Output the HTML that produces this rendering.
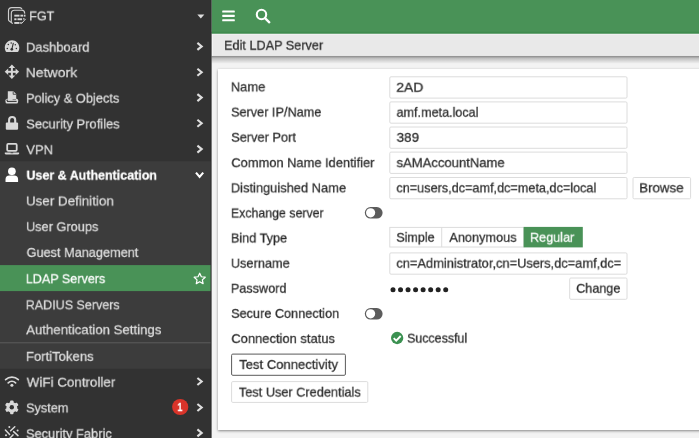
<!DOCTYPE html>
<html lang="en">
<head>
<meta charset="utf-8">
<title>Edit LDAP Server</title>
<style>
html,body{margin:0;padding:0}
body{width:699px;height:438px;overflow:hidden;position:relative;background:#f3f3f3;font-family:"Liberation Sans",sans-serif}
#card{position:absolute;left:218px;top:69px;width:500px;height:360.5px;background:#fff;box-shadow:0 .5px 2.5px rgba(0,0,0,.45)}
#shapes{position:absolute;left:0;top:0}
.t{position:absolute;white-space:nowrap;line-height:1;transform-origin:0 0;font-weight:400;will-change:transform}
</style>
</head>
<body>
<div id="card"></div>
<svg id="shapes" width="699" height="438" viewBox="0 0 699 438">
<defs>
<linearGradient id="tsh" x1="0" y1="0" x2="0" y2="1">
<stop offset="0" stop-color="#000" stop-opacity=".45"/>
<stop offset=".35" stop-color="#000" stop-opacity=".2"/>
<stop offset="1" stop-color="#000" stop-opacity="0"/>
</linearGradient>
</defs>
<!-- title bar + shadow -->
<rect x="211.5" y="55.8" width="490" height="8" fill="url(#tsh)"/>
<rect x="211.5" y="33" width="490" height="22.8" fill="#e9e9e9"/>
<!-- header -->
<rect x="211.5" y="33.4" width="490" height="1.2" fill="#f6f4f6"/>
<rect x="211.5" y="33.4" width="1.3" height="22.4" fill="#f6f6f6"/>
<rect x="211.5" y="0" width="490" height="33.5" fill="#499257"/>
<rect x="211.5" y="31.8" width="490" height="1.7" fill="#3f8b4e"/>
<!-- sidebar -->
<rect x="0" y="0" width="211.6" height="438" fill="#2b2b2b"/>
<rect x="0" y="0" width="210.5" height="438" fill="#323232"/>
<rect x="0" y="161.3" width="210.5" height="207.4" fill="#3c3c3c"/>
<rect x="0" y="265.1" width="210.5" height="26" fill="#499257"/>
<rect x="0" y="342.3" width="210.5" height="1" fill="#5c5c5c"/>
<!-- caret -->
<path d="M197.3 14.6 L204.3 14.6 L200.8 18.6 Z" fill="#dedede"/>
<!-- chevrons -->
<g fill="none" stroke="#dedede" stroke-width="2.1">
<path d="M197.4 42.9 L201.7 46.4 L197.4 49.9"/>
<path d="M197.4 68.7 L201.7 72.2 L197.4 75.7"/>
<path d="M197.4 94.1 L201.7 97.6 L197.4 101.1"/>
<path d="M197.4 119.8 L201.7 123.3 L197.4 126.8"/>
<path d="M197.4 145.6 L201.7 149.1 L197.4 152.6"/>
<path d="M197.4 378 L201.7 381.5 L197.4 385"/>
<path d="M197.4 404 L201.7 407.5 L197.4 411"/>
<path d="M197.4 429.4 L201.7 432.9 L197.4 436.4"/>
</g>
<path d="M196 172.6 L199.6 176.9 L203.2 172.6" fill="none" stroke="#fff" stroke-width="2.1"/>
<!-- star -->
<path d="M199.7 273.2 L201.35 276.75 L205.2 277.2 L202.35 279.85 L203.1 283.65 L199.7 281.75 L196.3 283.65 L197.05 279.85 L194.2 277.2 L198.05 276.75 Z" fill="none" stroke="#fff" stroke-width="1.25" stroke-linejoin="round"/>
<!-- badge -->
<circle cx="180.2" cy="407" r="8.1" fill="#d9342a"/>
<!-- FGT icon -->
<g fill="none" stroke="#cfcfcf" stroke-width="1.15" stroke-linecap="round" stroke-linejoin="round">
<path d="M12.3 23.3 L9.3 21 A2 2 0 0 1 8.5 19.4 V10.9 A3.3 3.3 0 0 1 11.8 7.6 H19.4 A3 3 0 0 1 21.7 8.7"/>
<path d="M11.3 21.6 V13.4 A3.2 3.2 0 0 1 14.5 10.2 H21.4 A3.2 3.2 0 0 1 24.7 13.2"/>
<path d="M21.9 23.2 L25.4 19.2" stroke-width="1"/>
</g>
<g fill="#d6d6d6">
<rect x="14.3" y="14.7" width="5.2" height="1.9"/><rect x="20.4" y="14.7" width="2.7" height="1.9"/><rect x="23.8" y="14.7" width="1.7" height="1.9"/>
<rect x="14.3" y="18.3" width="2.2" height="1.9"/><rect x="17.5" y="18.3" width="4.6" height="1.9"/><rect x="23" y="18.3" width="1.6" height="1.2"/>
<rect x="14.3" y="22" width="5.2" height="1.9"/><rect x="20.3" y="22" width="1.3" height="1.9"/>
</g>
<!-- dashboard -->
<path transform="translate(4.8,39.36) scale(0.0252,0.0262)" d="M288 32C128.94 32 0 160.94 0 320c0 52.8 14.25 102.26 39.06 144.8 5.61 9.62 16.3 15.2 27.44 15.2h443c11.14 0 21.83-5.58 27.44-15.2C561.75 422.26 576 372.8 576 320c0-159.06-128.94-288-288-288z" fill="#d8d8d8"/>
<g fill="#323232">
<circle cx="8.3" cy="44.6" r=".75"/><circle cx="11.2" cy="42.9" r=".75"/><circle cx="15.3" cy="44.7" r=".75"/><circle cx="7.3" cy="48.6" r=".75"/><circle cx="16.4" cy="48.6" r=".75"/>
<circle cx="11.8" cy="49.3" r="1.35"/>
</g>
<path d="M11.8 49.3 L13.3 43.2" stroke="#323232" stroke-width="1.1" stroke-linecap="round"/>
<!-- network arrows -->
<g fill="#d8d8d8">
<path d="M11.9 64.6 L15.2 68.1 H8.6 Z"/>
<path d="M11.9 79 L15.2 75.5 H8.6 Z"/>
<path d="M4.7 71.8 L8.2 68.5 V75.1 Z"/>
<path d="M19.1 71.8 L15.6 68.5 V75.1 Z"/>
<rect x="10.9" y="67" width="2" height="9.6"/>
<rect x="7" y="70.8" width="9.8" height="2"/>
</g>
<!-- policy -->
<g>
<path d="M7.8 91.3 H13.4 L16.2 94.1 V99.4 H7.8 Z" fill="#d8d8d8"/>
<path d="M13.2 91.5 V94.3 H16" fill="none" stroke="#323232" stroke-width=".8"/>
<rect x="5.5" y="98.7" width="12.6" height="4.9" rx="1.6" fill="#d8d8d8"/>
<rect x="7" y="100.9" width="9.6" height="1" fill="#323232"/>
<rect x="6.5" y="99.6" width="1.3" height="1.3" fill="#323232"/>
<rect x="12.6" y="99.2" width="3.4" height=".9" fill="#323232" opacity=".55"/>
</g>
<!-- lock -->
<rect x="5.8" y="122.5" width="12.3" height="7.3" rx="1.1" fill="#d8d8d8"/>
<path d="M9.1 123 V120 A3.05 3.05 0 0 1 15.2 120 V123" fill="none" stroke="#d8d8d8" stroke-width="2.1"/>
<!-- laptop -->
<rect x="7.2" y="143.9" width="9.5" height="6.9" rx="1" fill="none" stroke="#d8d8d8" stroke-width="1.8"/>
<path d="M4.8 152.4 H19.1 V153.2 A1.4 1.4 0 0 1 17.7 154.6 H6.2 A1.4 1.4 0 0 1 4.8 153.2 Z" fill="#d8d8d8"/>
<rect x="10.6" y="152.4" width="2.6" height=".8" fill="#323232"/>
<!-- user -->
<circle cx="11.9" cy="171.3" r="3.85" fill="#fff"/>
<path d="M5.5 181.8 V179.6 A4 4 0 0 1 9.5 175.6 H14.1 A4 4 0 0 1 18.1 179.6 V181.8 A.6 .6 0 0 1 17.5 182 H6.1 A.6 .6 0 0 1 5.5 181.8 Z" fill="#fff"/>
<!-- wifi -->
<g fill="none" stroke="#d8d8d8" stroke-width="1.7" stroke-linecap="round">
<path d="M5.6 379.6 A9.2 9.2 0 0 1 18.3 379.6"/>
<path d="M8.2 382.9 A5.4 5.4 0 0 1 15.6 382.9"/>
</g>
<circle cx="11.9" cy="385.3" r="1.55" fill="#d8d8d8"/>
<!-- gear -->
<g transform="translate(11.8 407.3)">
<g fill="#d8d8d8">
<circle r="5.35"/>
<rect x="-1.7" y="-6.9" width="3.4" height="13.8" rx=".9"/>
<rect x="-1.7" y="-6.9" width="3.4" height="13.8" rx=".9" transform="rotate(60)"/>
<rect x="-1.7" y="-6.9" width="3.4" height="13.8" rx=".9" transform="rotate(120)"/>
</g>
<circle r="2.2" fill="#323232"/>
</g>
<!-- fabric -->
<g stroke="#d8d8d8" stroke-width="1.5" stroke-linecap="round" fill="none">
<path d="M10.6 430.8 L14.8 426.8"/>
<path d="M5.4 430 L9.6 434.4"/>
<path d="M13.6 431.6 L18 435.6"/>
<path d="M9.6 438.4 L13 434.9"/>
</g>
<g fill="#d8d8d8"><circle cx="9.3" cy="427" r="1"/><circle cx="17.6" cy="430.6" r="1"/><circle cx="6" cy="435.3" r="1"/></g>

<g fill="#fff" stroke="#dcdcdc" stroke-width="1">
<rect x="389.8" y="76.8" width="237.2" height="21.3" rx="1.2"/>
<rect x="389.8" y="101.9" width="237.2" height="21.3" rx="1.2"/>
<rect x="389.8" y="127" width="237.2" height="21.3" rx="1.2"/>
<rect x="389.8" y="152.1" width="237.2" height="21.3" rx="1.2"/>
<rect x="389.8" y="177.5" width="237.2" height="21.3" rx="1.2"/>
<rect x="389.8" y="252.9" width="237.2" height="21.3" rx="1.2"/>
<rect x="633" y="177.5" width="57.6" height="21.3" rx="1.2"/>
<rect x="569.7" y="278" width="57.3" height="21.3" rx="1.2"/>
<rect x="231.6" y="381.6" width="136.2" height="20.8" rx="1.2"/>
</g>
<rect x="231.6" y="354.1" width="113.8" height="21.2" rx="1.2" fill="#fff" stroke="#5a5a5a" stroke-width="1"/>
<!-- bind type segmented -->
<rect x="389.8" y="227.4" width="134" height="19.6" fill="#fff" stroke="#dcdcdc" stroke-width="1"/>
<rect x="441.2" y="227.4" width="1" height="19.6" fill="#dcdcdc"/>
<rect x="523.6" y="226.9" width="59.2" height="20.5" fill="#499257"/>
<!-- toggles -->
<g>
<rect x="364.8" y="207" width="17.8" height="11.6" rx="5.8" fill="#5c5c5c"/>
<circle cx="370.6" cy="212.8" r="4.6" fill="#fff"/>
<rect x="364.8" y="308" width="17.8" height="11.6" rx="5.8" fill="#5c5c5c"/>
<circle cx="370.6" cy="313.8" r="4.6" fill="#fff"/>
</g>
<!-- password dots -->
<g fill="#222">
<circle cx="393.0" cy="289.7" r="2.5"/><circle cx="400.53" cy="289.7" r="2.5"/><circle cx="408.06" cy="289.7" r="2.5"/><circle cx="415.59" cy="289.7" r="2.5"/><circle cx="423.12" cy="289.7" r="2.5"/><circle cx="430.65" cy="289.7" r="2.5"/><circle cx="438.18" cy="289.7" r="2.5"/><circle cx="445.71" cy="289.7" r="2.5"/>
</g>
<!-- success icon -->
<circle cx="397.15" cy="338" r="6.15" fill="#3b9151"/>
<path d="M393.7 338.2 L396.2 340.7 L400.7 336" fill="none" stroke="#fff" stroke-width="1.9"/>
<!-- header icons -->
<g fill="#fff">
<rect x="222.2" y="10.4" width="12.6" height="2.1" rx=".6"/>
<rect x="222.2" y="14.8" width="12.6" height="2.1" rx=".6"/>
<rect x="222.2" y="19.2" width="12.6" height="2.1" rx=".6"/>
</g>
<circle cx="261.5" cy="14.5" r="4.7" fill="none" stroke="#fff" stroke-width="2.1"/>
<path d="M265 18.2 L269.3 22.3" stroke="#fff" stroke-width="2.3" stroke-linecap="round" fill="none"/>

</svg>
<span class="t" style="left:29px;top:8px;font-size:15px;color:#dedede;transform:translate(0.14px,0.78px) scale(0.8372,0.89);-webkit-text-stroke:0.29px #dedede">FGT</span>
<span class="t" style="left:25px;top:40px;font-size:15px;color:#dedede;transform:translate(0.95px,0.11px) scale(0.8660,0.89);-webkit-text-stroke:0.29px #dedede">Dashboard</span>
<span class="t" style="left:25px;top:65px;font-size:15px;color:#dedede;transform:translate(0.63px,0.55px) scale(0.9375,0.89);-webkit-text-stroke:0.29px #dedede">Network</span>
<span class="t" style="left:25px;top:91px;font-size:15px;color:#dedede;transform:translate(0.97px,0.10px) scale(0.8548,0.89);-webkit-text-stroke:0.29px #dedede">Policy &amp; Objects</span>
<span class="t" style="left:26px;top:116px;font-size:15px;color:#dedede;transform:translate(0.21px,0.93px) scale(0.8629,0.89);-webkit-text-stroke:0.29px #dedede">Security Profiles</span>
<span class="t" style="left:26px;top:142px;font-size:15px;color:#dedede;transform:translate(0.26px,0.62px) scale(0.8677,0.89);-webkit-text-stroke:0.29px #dedede">VPN</span>
<span class="t" style="left:26px;top:168px;font-size:15px;color:#ffffff;transform:translate(0.47px,0.08px) scale(0.8313,0.89);-webkit-text-stroke:0.29px #ffffff;font-weight:700">User &amp; Authentication</span>
<span class="t" style="left:25px;top:193px;font-size:15px;color:#dedede;transform:translate(0.94px,0.93px) scale(0.8934,0.89);-webkit-text-stroke:0.29px #dedede">User Definition</span>
<span class="t" style="left:25px;top:219px;font-size:15px;color:#dedede;transform:translate(0.97px,0.62px) scale(0.8515,0.89);-webkit-text-stroke:0.29px #dedede">User Groups</span>
<span class="t" style="left:26px;top:245px;font-size:15px;color:#dedede;transform:translate(0.58px,0.32px) scale(0.8479,0.89);-webkit-text-stroke:0.29px #dedede">Guest Management</span>
<span class="t" style="left:25px;top:271px;font-size:15px;color:#ffffff;transform:translate(0.79px,0.64px) scale(0.8379,0.89);-webkit-text-stroke:0.29px #ffffff">LDAP Servers</span>
<span class="t" style="left:25px;top:297px;font-size:15px;color:#dedede;transform:translate(0.73px,0.73px) scale(0.8349,0.89);-webkit-text-stroke:0.29px #dedede">RADIUS Servers</span>
<span class="t" style="left:26px;top:322px;font-size:15px;color:#dedede;transform:translate(0.15px,0.68px) scale(0.8813,0.89);-webkit-text-stroke:0.29px #dedede">Authentication Settings</span>
<span class="t" style="left:25px;top:349px;font-size:15px;color:#dedede;transform:translate(0.85px,0.31px) scale(0.8754,0.89);-webkit-text-stroke:0.29px #dedede">FortiTokens</span>
<span class="t" style="left:26px;top:375px;font-size:15px;color:#dedede;transform:translate(0.67px,0.10px) scale(0.8935,0.89);-webkit-text-stroke:0.29px #dedede">WiFi Controller</span>
<span class="t" style="left:25px;top:400px;font-size:15px;color:#dedede;transform:translate(0.98px,0.78px) scale(0.8487,0.89);-webkit-text-stroke:0.29px #dedede">System</span>
<span class="t" style="left:25px;top:426px;font-size:15px;color:#dedede;transform:translate(0.94px,0.63px) scale(0.8588,0.89);-webkit-text-stroke:0.29px #dedede">Security Fabric</span>
<span class="t" style="left:224px;top:38px;font-size:15.46px;color:#2d2d2d;transform:translate(0.05px,0.14px) scale(0.8199,0.89);-webkit-text-stroke:0.29px #2d2d2d">Edit LDAP Server</span>
<span class="t" style="left:230px;top:79px;font-size:15px;color:#2d2d2d;transform:translate(0.82px,0.78px) scale(0.8616,0.89);-webkit-text-stroke:0.29px #2d2d2d">Name</span>
<span class="t" style="left:231px;top:104px;font-size:15px;color:#2d2d2d;transform:translate(0.02px,0.95px) scale(0.8471,0.89);-webkit-text-stroke:0.29px #2d2d2d">Server IP/Name</span>
<span class="t" style="left:231px;top:130px;font-size:15px;color:#2d2d2d;transform:translate(0.19px,0.11px) scale(0.8534,0.89);-webkit-text-stroke:0.29px #2d2d2d">Server Port</span>
<span class="t" style="left:231px;top:155px;font-size:15px;color:#2d2d2d;transform:translate(0.35px,0.62px) scale(0.8580,0.89);-webkit-text-stroke:0.29px #2d2d2d">Common Name Identifier</span>
<span class="t" style="left:230px;top:180px;font-size:15px;color:#2d2d2d;transform:translate(0.82px,0.78px) scale(0.8586,0.89);-webkit-text-stroke:0.29px #2d2d2d">Distinguished Name</span>
<span class="t" style="left:230px;top:205px;font-size:15px;color:#2d2d2d;transform:translate(0.90px,0.92px) scale(0.8239,0.89);-webkit-text-stroke:0.29px #2d2d2d">Exchange server</span>
<span class="t" style="left:230px;top:230px;font-size:15px;color:#2d2d2d;transform:translate(0.87px,0.92px) scale(0.8462,0.89);-webkit-text-stroke:0.29px #2d2d2d">Bind Type</span>
<span class="t" style="left:230px;top:256px;font-size:15px;color:#2d2d2d;transform:translate(0.85px,0.11px) scale(0.8511,0.89);-webkit-text-stroke:0.29px #2d2d2d">Username</span>
<span class="t" style="left:230px;top:281px;font-size:15px;color:#2d2d2d;transform:translate(0.85px,0.18px) scale(0.8445,0.89);-webkit-text-stroke:0.29px #2d2d2d">Password</span>
<span class="t" style="left:231px;top:306px;font-size:15px;color:#2d2d2d;transform:translate(0.10px,0.31px) scale(0.8469,0.89);-webkit-text-stroke:0.29px #2d2d2d">Secure Connection</span>
<span class="t" style="left:231px;top:331px;font-size:15px;color:#2d2d2d;transform:translate(0.35px,0.53px) scale(0.8630,0.89);-webkit-text-stroke:0.29px #2d2d2d">Connection status</span>
<span class="t" style="left:239px;top:357px;font-size:15px;color:#2d2d2d;transform:translate(0.21px,0.43px) scale(0.8702,0.89);-webkit-text-stroke:0.29px #2d2d2d">Test Connectivity</span>
<span class="t" style="left:238px;top:385px;font-size:15px;color:#2d2d2d;transform:translate(0.88px,0.01px) scale(0.8495,0.89);-webkit-text-stroke:0.29px #2d2d2d">Test User Credentials</span>
<span class="t" style="left:396px;top:80px;font-size:15px;color:#2d2d2d;transform:translate(0.25px,0.11px) scale(0.9314,0.89);-webkit-text-stroke:0.29px #2d2d2d">2AD</span>
<span class="t" style="left:396px;top:105px;font-size:15px;color:#2d2d2d;transform:translate(0.56px,0.18px) scale(0.8394,0.89);-webkit-text-stroke:0.29px #2d2d2d">amf.meta.local</span>
<span class="t" style="left:396px;top:130px;font-size:15px;color:#2d2d2d;transform:translate(0.55px,0.31px) scale(0.9013,0.89);-webkit-text-stroke:0.29px #2d2d2d">389</span>
<span class="t" style="left:396px;top:155px;font-size:15px;color:#2d2d2d;transform:translate(0.53px,0.61px) scale(0.8710,0.89);-webkit-text-stroke:0.29px #2d2d2d">sAMAccountName</span>
<span class="t" style="left:396px;top:180px;font-size:15px;color:#2d2d2d;transform:translate(0.43px,0.78px) scale(0.8441,0.89);-webkit-text-stroke:0.29px #2d2d2d">cn=users,dc=amf,dc=meta,dc=local</span>
<span class="t" style="left:639px;top:180px;font-size:15px;color:#2d2d2d;transform:translate(0.20px,0.77px) scale(0.8864,0.89);-webkit-text-stroke:0.29px #2d2d2d">Browse</span>
<span class="t" style="left:396px;top:230px;font-size:15px;color:#2d2d2d;transform:translate(0.31px,0.17px) scale(0.8340,0.89);-webkit-text-stroke:0.29px #2d2d2d">Simple</span>
<span class="t" style="left:449px;top:230px;font-size:15px;color:#2d2d2d;transform:translate(0.36px,0.25px) scale(0.8487,0.89);-webkit-text-stroke:0.29px #2d2d2d">Anonymous</span>
<span class="t" style="left:529px;top:230px;font-size:15px;color:#ffffff;transform:translate(0.97px,0.18px) scale(0.8432,0.89);-webkit-text-stroke:0.29px #ffffff">Regular</span>
<span class="t" style="left:396px;top:256px;font-size:15px;color:#2d2d2d;transform:translate(0.41px,0.15px) scale(0.8563,0.89);-webkit-text-stroke:0.29px #2d2d2d">cn=Administrator,cn=Users,dc=amf,dc=</span>
<span class="t" style="left:576px;top:281px;font-size:15px;color:#2d2d2d;transform:translate(0.20px,0.17px) scale(0.8405,0.89);-webkit-text-stroke:0.29px #2d2d2d">Change</span>
<span class="t" style="left:407px;top:330px;font-size:15px;color:#2d2d2d;transform:translate(0.04px,1.00px) scale(0.8291,0.89);-webkit-text-stroke:0.29px #2d2d2d">Successful</span>
<span class="t" style="left:177px;top:402px;font-size:12.12px;color:#ffffff;transform:translate(0.52px,0.06px) scale(0.7122,0.89);-webkit-text-stroke:0.29px #ffffff;font-weight:700">1</span>
</body>
</html>
